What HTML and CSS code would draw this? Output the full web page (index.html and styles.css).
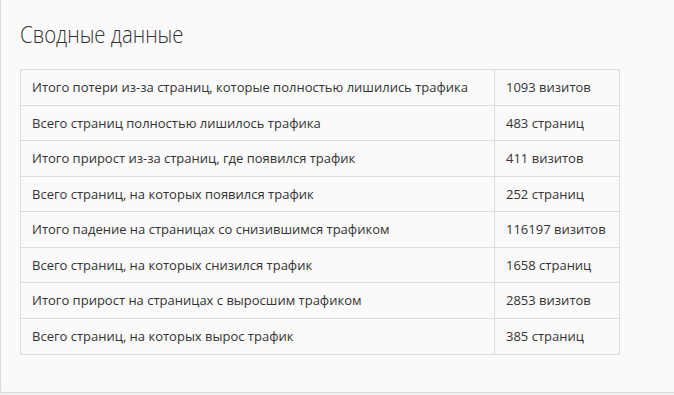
FILE: index.html
```html
<!DOCTYPE html>
<html lang="ru">
<head>
<meta charset="utf-8">
<title>Сводные данные</title>
<link rel="stylesheet" href="styles.css">
</head>
<body>
<div class="card">
  <h2 class="card-title">Сводные данные</h2>
  <table class="summary">
    <tr><td class="label">Итого потери из-за страниц, которые полностью лишились трафика</td><td class="value">1093 визитов</td></tr>
    <tr><td class="label">Всего страниц полностью лишилось трафика</td><td class="value">483 страниц</td></tr>
    <tr><td class="label">Итого прирост из-за страниц, где появился трафик</td><td class="value">411 визитов</td></tr>
    <tr><td class="label">Всего страниц, на которых появился трафик</td><td class="value">252 страниц</td></tr>
    <tr><td class="label">Итого падение на страницах со снизившимся трафиком</td><td class="value">116197 визитов</td></tr>
    <tr><td class="label">Всего страниц, на которых снизился трафик</td><td class="value">1658 страниц</td></tr>
    <tr><td class="label">Итого прирост на страницах с выросшим трафиком</td><td class="value">2853 визитов</td></tr>
    <tr><td class="label">Всего страниц, на которых вырос трафик</td><td class="value">385 страниц</td></tr>
  </table>
</div>
</body>
</html>
```

FILE: styles.css
```css
html, body {
  margin: 0;
  padding: 0;
}
body {
  background: #efefef;
  font-family: "Open Sans", "Noto Sans", sans-serif;
  color: #333;
  overflow: hidden;
}
.card {
  background: #fafafa;
  border-left: 1px solid #dcdcdc;
  border-bottom: 1px solid #dadada;
  border-radius: 0 0 0 3px;
  box-shadow: 0 1px 1px rgba(0, 0, 0, 0.05);
  margin-right: -10px;
  padding: 22px 0 37px 19px;
}
.card-title {
  margin: 0 0 23px 0;
  font-size: 23px;
  font-weight: 300;
  line-height: 24px;
  color: #333;
  transform: scaleX(0.885);
  transform-origin: left center;
}
.summary {
  width: 600px;
  border-collapse: collapse;
  font-size: 13px;
  line-height: 18.57px;
}
.summary td {
  border: 1px solid #dddddd;
  padding: 8px 11px;
  vertical-align: top;
}
.summary .label {
  width: 451px;
}
```
